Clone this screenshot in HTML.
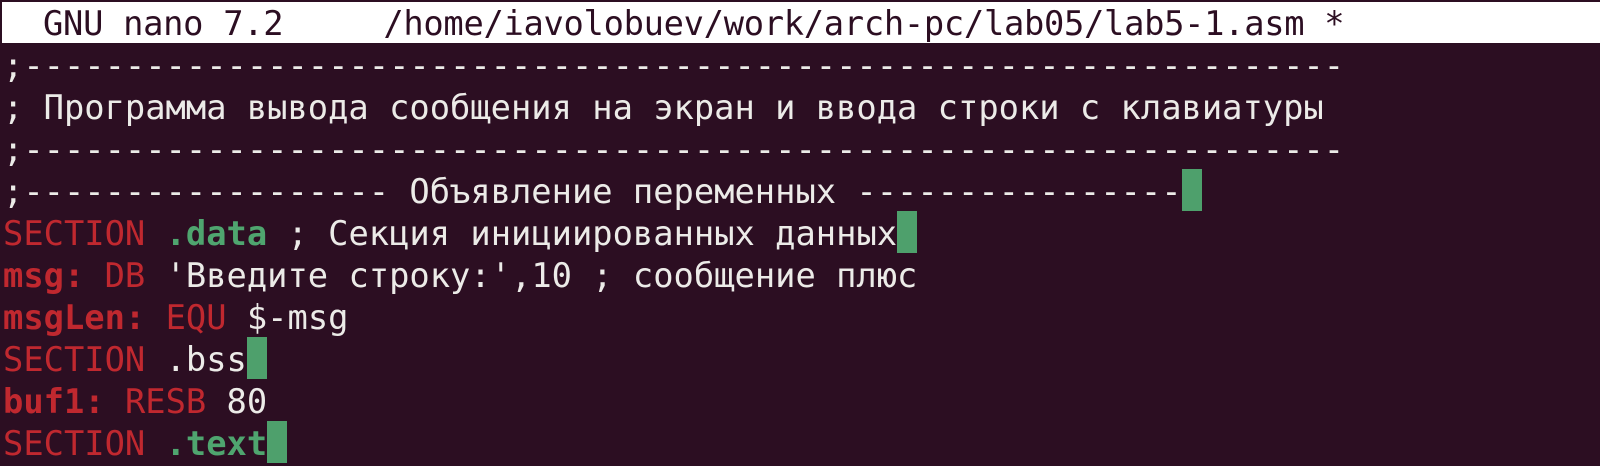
<!DOCTYPE html>
<html><head><meta charset="utf-8"><style>
html,body{margin:0;padding:0;background:#2c0e22;width:1600px;height:466px;overflow:hidden}
.t{position:absolute;left:0;top:0;width:1600px;height:466px;font-family:"DejaVu Sans Mono","Liberation Mono",monospace;font-size:33.75px;color:#ecebe8}
.r{position:absolute;left:3px;height:42px;line-height:44px;white-space:pre}
.bar{position:absolute;left:2px;top:2px;width:1598px;height:41px;background:#fff}
.ti{color:#2c0e22;letter-spacing:-0.3px}
.red{color:#c0282f}
.b{font-weight:bold}
.g{color:#4fa56f;font-weight:bold}
.c{display:inline-block;width:20px;height:42px;background:#4ea06c;vertical-align:top;margin-top:-1px}
</style></head><body><div class="t">
<div class="bar"></div>
<div class="r ti" style="top:2px">  GNU nano 7.2     /home/iavolobuev/work/arch-pc/lab05/lab5-1.asm *</div>
<div class="r" style="top:44px">;-----------------------------------------------------------------</div>
<div class="r" style="top:86px">; Программа вывода сообщения на экран и ввода строки с клавиатуры</div>
<div class="r" style="top:128px">;-----------------------------------------------------------------</div>
<div class="r" style="top:170px">;------------------ Объявление переменных ----------------<span class="c"></span></div>
<div class="r" style="top:212px"><span class="red">SECTION</span> <span class="g">.data</span> ; Секция инициированных данных<span class="c"></span></div>
<div class="r" style="top:254px"><span class="red b">msg:</span> <span class="red">DB</span> 'Введите строку:',10 ; сообщение плюс</div>
<div class="r" style="top:296px"><span class="red b">msgLen:</span> <span class="red">EQU</span> $-msg</div>
<div class="r" style="top:338px"><span class="red">SECTION</span> .bss<span class="c"></span></div>
<div class="r" style="top:380px"><span class="red b">buf1:</span> <span class="red">RESB</span> 80</div>
<div class="r" style="top:422px"><span class="red">SECTION</span> <span class="g">.text</span><span class="c"></span></div>
</div></body></html>
